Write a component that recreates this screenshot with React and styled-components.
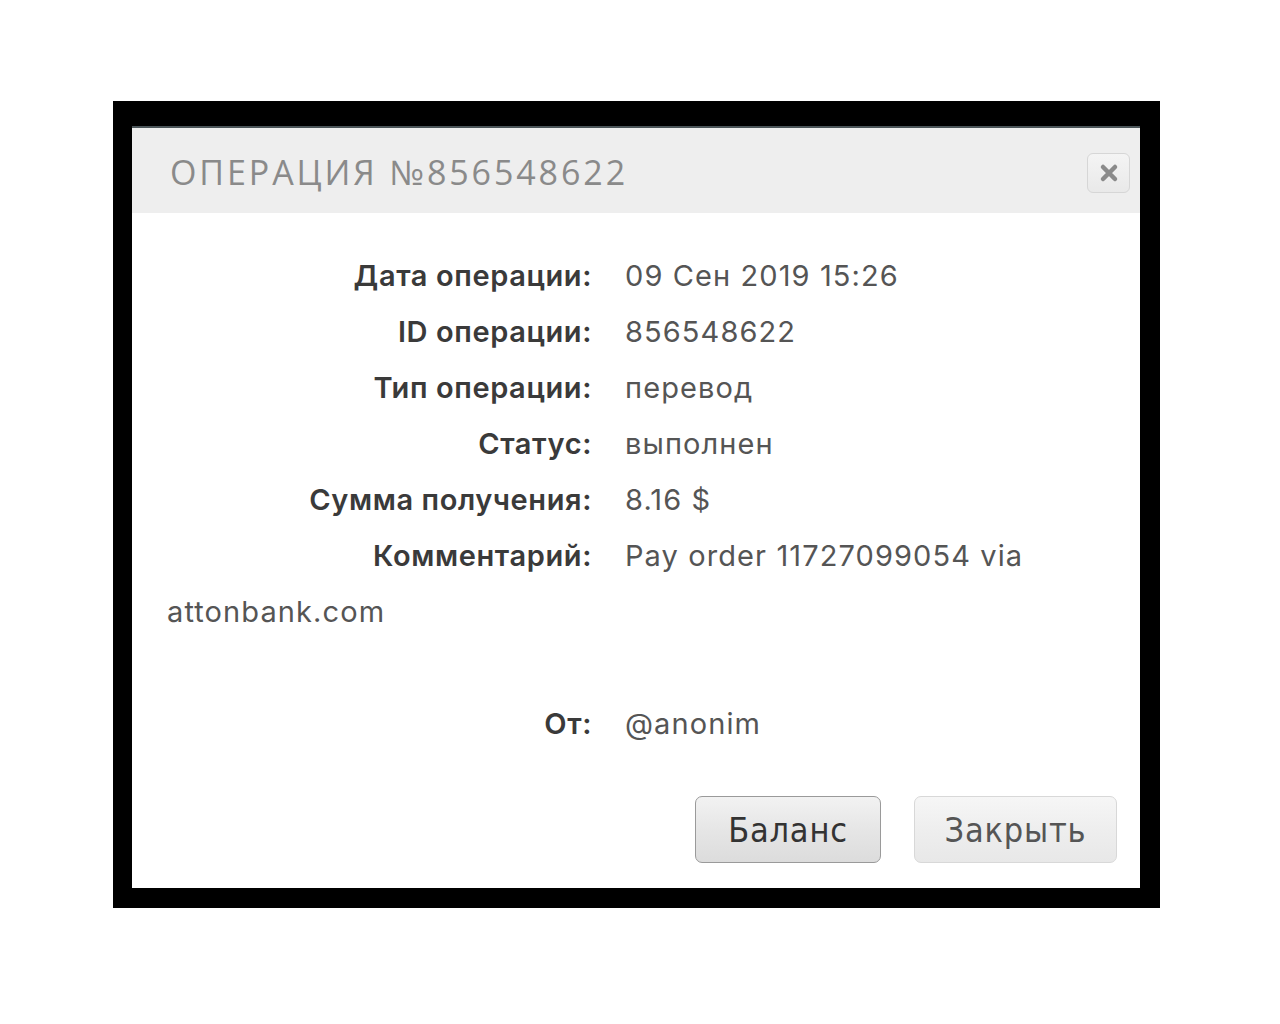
import styled, { createGlobalStyle } from "styled-components"

const GlobalStyle = createGlobalStyle`
    body{
        margin: 0;
        background: #fff;
        font-family: Inter, "Noto Sans", sans-serif;
    }
`

const rows = [
    { label: "Дата операции:", value: "09 Сен 2019 15:26" },
    { label: "ID операции:", value: "856548622" },
    { label: "Тип операции:", value: "перевод" },
    { label: "Статус:", value: "выполнен" },
    { label: "Сумма получения:", value: "8.16 $" },
    { label: "Комментарий:", value: "Pay order 11727099054 via attonbank.com" },
]

function App() {
    return(
        <>
            <GlobalStyle />
            <Frame>
                <Dialog>
                    <Header>
                        <Title>ОПЕРАЦИЯ №856548622</Title>
                        <CloseBtn type="button" aria-label="Close">
                            <svg width="20" height="20" viewBox="0 0 20 20">
                                <path d="M4 4 L16 16 M16 4 L4 16" stroke="#8a8a8a" strokeWidth="4.5" strokeLinecap="round" />
                            </svg>
                        </CloseBtn>
                    </Header>
                    <Body>
                        <Details>
                            {rows.map((row, index) => {
                                return(
                                    <Row key={index}>
                                        <Label>{row.label}</Label>
                                        <Value>{row.value}</Value>
                                    </Row>
                                )
                            })}
                            <Row />
                            <Row>
                                <Label>От:</Label>
                                <Value>@anonim</Value>
                            </Row>
                        </Details>
                        <Footer>
                            <Button $primary>Баланс</Button>
                            <Button>Закрыть</Button>
                        </Footer>
                    </Body>
                </Dialog>
            </Frame>
        </>
    )
}

export default App

const Frame = styled.div`
    margin: 101px 0 0 113px;
    width: 1047px;
    box-sizing: border-box;
    background: #000;
    padding: 25px 20px 20px 19px;
`

const Dialog = styled.div`
    background: #fff;
    border-top: 2px solid #4b5559;
`

const Header = styled.div`
    height: 85px;
    background: #eeeeee;
    display: flex;
    align-items: center;
    justify-content: space-between;
    padding: 0 10px 0 38px;
`

const Title = styled.div`
    font-family: "Open Sans", sans-serif;
    font-size: 34px;
    font-weight: 400;
    letter-spacing: 2.9px;
    color: #8a8a8a;
    padding-top: 2px;
`

const CloseBtn = styled.button`
    width: 43px;
    height: 40px;
    margin-top: 5px;
    border: 1px solid #d6d6d6;
    border-radius: 6px;
    background: linear-gradient(#f4f4f4, #e9e9e9);
    display: flex;
    align-items: center;
    justify-content: center;
    padding: 0;
`

const Body = styled.div`
    padding: 35px 23px 25px 35px;
`

const Details = styled.div`
    padding-right: 40px;
`

const Row = styled.div`
    line-height: 56px;
    min-height: 56px;
    font-size: 29px;
    letter-spacing: 1.1px;
`

const Label = styled.span`
    display: inline-block;
    width: 425px;
    text-align: right;
    font-weight: 600;
    color: #3a3a3a;
    letter-spacing: 0.6px;
`

const Value = styled.span`
    margin-left: 33px;
    color: #555;
`

const Footer = styled.div`
    display: flex;
    justify-content: flex-end;
    gap: 33px;
    margin-top: 44px;
`

const Button = styled.button`
    height: 67px;
    width: ${p => p.$primary ? "186px" : "203px"};
    padding: 0;
    border-radius: 7px;
    border: 1px solid ${p => p.$primary ? "#9a9a9a" : "#d8d8d8"};
    background: ${p => p.$primary
        ? "linear-gradient(#f2f2f2, #e6e6e6 50%, #dcdcdc)"
        : "linear-gradient(#f6f6f6, #eeeeee 50%, #e8e8e8)"};
    font-family: "DejaVu Sans Condensed", "DejaVu Sans", sans-serif;
    font-size: 34px;
    letter-spacing: 0.8px;
    color: ${p => p.$primary ? "#333" : "#555"};
`
